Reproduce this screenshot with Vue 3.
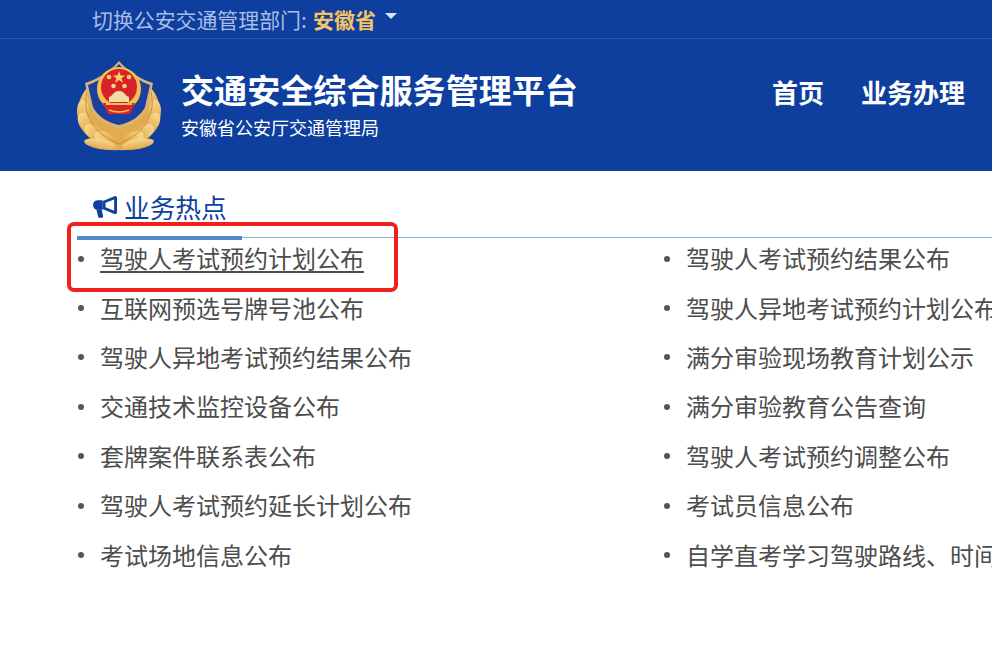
<template>
  <div class="page">
    <header class="head">
      <div class="switch-bar">
        <span class="switch-label">切换公安交通管理部门:</span>
        <b class="province">安徽省</b>
        <i class="caret"></i>
      </div>
      <div class="brand-bar">
        <svg class="badge" viewBox="0 0 90 92" width="90" height="92">
          <defs>
            <linearGradient id="leaf" x1="0" y1="0" x2="0" y2="1">
              <stop offset="0" stop-color="#f6d88f" />
              <stop offset="1" stop-color="#e3a94a" />
            </linearGradient>
          </defs>
          <!-- 麦穗，右边镜像 -->
          <g v-for="side in sides" :key="side" :transform="side">
            <path d="M13 27 C4 36 1 50 3 60 C6 72 14 78 22 81 C14 82 10 80 9 80 C16 88 32 91 44 90 V66 C30 62 20 50 13 27Z" fill="#e2ab50" />
            <ellipse
              v-for="(l, i) in leaves"
              :key="i"
              :cx="l[0]"
              :cy="l[1]"
              :rx="l[2]"
              :ry="l[3]"
              :transform="`rotate(${l[4]} ${l[0]} ${l[1]})`"
              fill="url(#leaf)"
            />
            <path d="M12 32 C9 44 11 58 22 70 C28 76 36 80 44 84" stroke="#c98f35" stroke-width="1" fill="none" />
          </g>
          <!-- 盾 -->
          <path d="M44 1 C50 8 62 18 78 23 L73 48 C69 58 56 66 44 68 C32 66 19 58 15 48 L10 23 C26 18 38 8 44 1Z" fill="#d9b473" />
          <path d="M44 4 C50 11 61 20 75 25 L70 47 C66 56 55 63 44 65 C33 63 22 56 18 47 L13 25 C27 20 38 11 44 4Z" fill="#1b3f9e" />
          <!-- 国徽 -->
          <circle cx="44" cy="29" r="22" fill="#f2c14e" />
          <circle cx="44" cy="27" r="18" fill="#d8232a" />
          <path d="M44 11 l1.600 4.400 4.600 .1 -3.700 2.800 1.400 4.500 -3.900 -2.700 -3.900 2.700 1.400 -4.500 -3.700 -2.800 4.600 -.1Z" fill="#f7d668" />
          <circle cx="34" cy="17" r="2.300" fill="#f7d668" />
          <circle cx="54" cy="17" r="2.300" fill="#f7d668" />
          <circle cx="38.500" cy="26" r="2.300" fill="#f7d668" />
          <circle cx="49.500" cy="26" r="2.300" fill="#f7d668" />
          <path d="M34 42 V37 C38 36 38 31 44 31 C50 31 50 36 54 37 V42Z" fill="#f3dca2" />
          <path d="M28 43 H60 L55 54 H33Z" fill="#d8232a" />
          <path d="M31 44 H57" stroke="#f2c14e" stroke-width="2" />
          <path d="M34 50 Q44 54 54 50" stroke="#f2c14e" stroke-width="1.600" fill="none" />
        </svg>
        <div class="brand-text">
          <h1>交通安全综合服务管理平台</h1>
          <p>安徽省公安厅交通管理局</p>
        </div>
        <nav class="nav">
          <a>首页</a>
          <a>业务办理</a>
        </nav>
      </div>
    </header>

    <section class="hot">
      <div class="hot-title">
        <div class="hot-tab">
          <svg class="horn" viewBox="0 0 28 24" width="27" height="23">
            <path d="M12 6 L24 1 C25 1 26 2 26 3 V18 C26 19 25 20 24 20 L12 15 H11 V6Z M14 8.200 V12.800 L23 16.400 V4.600Z" fill="#0e3f9e" fill-rule="evenodd" />
            <path d="M11 5.500 V15.500 H5.500 C2.600 15.500 1 13.200 1 10.500 C1 7.800 2.600 5.500 5.500 5.500Z" fill="#0e3f9e" />
            <path d="M4.500 15 H10 L11.500 22 C11.700 23 11 23.800 10.200 23.800 H7.600 C6.900 23.800 6.500 23.100 6.300 22.500Z" fill="#0e3f9e" />
          </svg>
          <span>业务热点</span>
        </div>
      </div>
      <ul class="hot-list">
        <li v-for="(item, i) in items" :key="item" :class="{ active: i === 0 }">
          <span class="dot"></span>
          <a>{{ item }}</a>
        </li>
      </ul>
      <div class="mark"></div>
    </section>
  </div>
</template>

<script setup>
const sides = ['', 'translate(88 0) scale(-1 1)']

// cx, cy, rx, ry, rotate
const leaves = [
  [12, 38, 5, 10, 18],
  [8, 50, 6, 10, 0],
  [10, 62, 6.500, 10, -25],
  [18, 72, 6.500, 10, -50],
  [30, 78, 6, 11, -70],
  [25, 84, 16, 5, 10],
]

const items = [
  '驾驶人考试预约计划公布',
  '驾驶人考试预约结果公布',
  '互联网预选号牌号池公布',
  '驾驶人异地考试预约计划公布',
  '驾驶人异地考试预约结果公布',
  '满分审验现场教育计划公示',
  '交通技术监控设备公布',
  '满分审验教育公告查询',
  '套牌案件联系表公布',
  '驾驶人考试预约调整公布',
  '驾驶人考试预约延长计划公布',
  '考试员信息公布',
  '考试场地信息公布',
  '自学直考学习驾驶路线、时间公布',
]
</script>

<style>
html, body {
  margin: 0;
  background: #fff;
  overflow: hidden;
}
</style>

<style scoped>
.page {
  width: 992px;
  height: 663px;
  overflow: hidden;
  font-family: "Noto Sans CJK SC", "Liberation Sans", sans-serif;
}

.head {
  background: #0e3f9e;
  height: 171px;
  color: #fff;
}

.switch-bar {
  height: 38px;
  border-bottom: 1px solid #2a56ad;
  padding-left: 92px;
  display: flex;
  align-items: center;
  font-size: 20.900px;
  line-height: 36px;
}

.switch-label {
  color: #a9bde6;
  width: 221px;
  white-space: nowrap;
}

.province {
  color: #f8c263;
  font-size: 21px;
}

.caret {
  margin: -6px 0 0 9px;
  border-left: 6px solid transparent;
  border-right: 6px solid transparent;
  border-top: 6px solid #dbe4f7;
}

.brand-bar {
  display: flex;
  align-items: center;
  height: 132px;
  padding-left: 75px;
}

.badge {
  margin-top: 2px;
  flex: none;
}

.brand-text {
  margin-left: 16px;
  width: 591px;
  margin-top: -3px;
}

.brand-text h1 {
  margin: 0;
  font-size: 33.100px;
  line-height: 44px;
  font-weight: 700;
  white-space: nowrap;
}

.brand-text p {
  margin: 3px 0 0;
  font-size: 18px;
  line-height: 26px;
  white-space: nowrap;
}

.nav {
  display: flex;
  gap: 37px;
  font-size: 26px;
  font-weight: 700;
  white-space: nowrap;
  margin-top: -28px;
}

.hot {
  position: relative;
  padding: 0 0 0 77px;
}

.hot-title {
  height: 67px;
  width: 915px;
  box-sizing: border-box;
  border-bottom: 1px solid #8db4dc;
  display: flex;
  align-items: flex-end;
}

.hot-tab {
  width: 165px;
  height: 48px;
  box-sizing: border-box;
  margin-bottom: -3px;
  border-bottom: 4px solid #4f8acb;
  padding: 0 0 16px 15px;
  display: flex;
  align-items: center;
  gap: 5px;
  color: #0e3f9e;
  font-size: 25.700px;
  white-space: nowrap;
}

.horn {
  flex: none;
}

.hot-list {
  list-style: none;
  margin: -5px 0 0;
  padding: 0;
  display: grid;
  grid-template-columns: 586px 400px;
  grid-auto-rows: 49.400px;
  color: #4d4d4d;
  font-size: 24px;
}

.hot-list li {
  display: flex;
  align-items: center;
  white-space: nowrap;
}

.hot-list li.active a {
  text-decoration: underline;
  text-underline-offset: 3px;
}

.dot {
  width: 6px;
  height: 6px;
  border-radius: 50%;
  background: #555;
  margin: 2px 16px 0 1px;
  flex: none;
}

.mark {
  position: absolute;
  left: 67px;
  top: 51px;
  width: 331px;
  height: 70px;
  box-sizing: border-box;
  border: 4px solid #f0201c;
  border-radius: 7px;
}
</style>
